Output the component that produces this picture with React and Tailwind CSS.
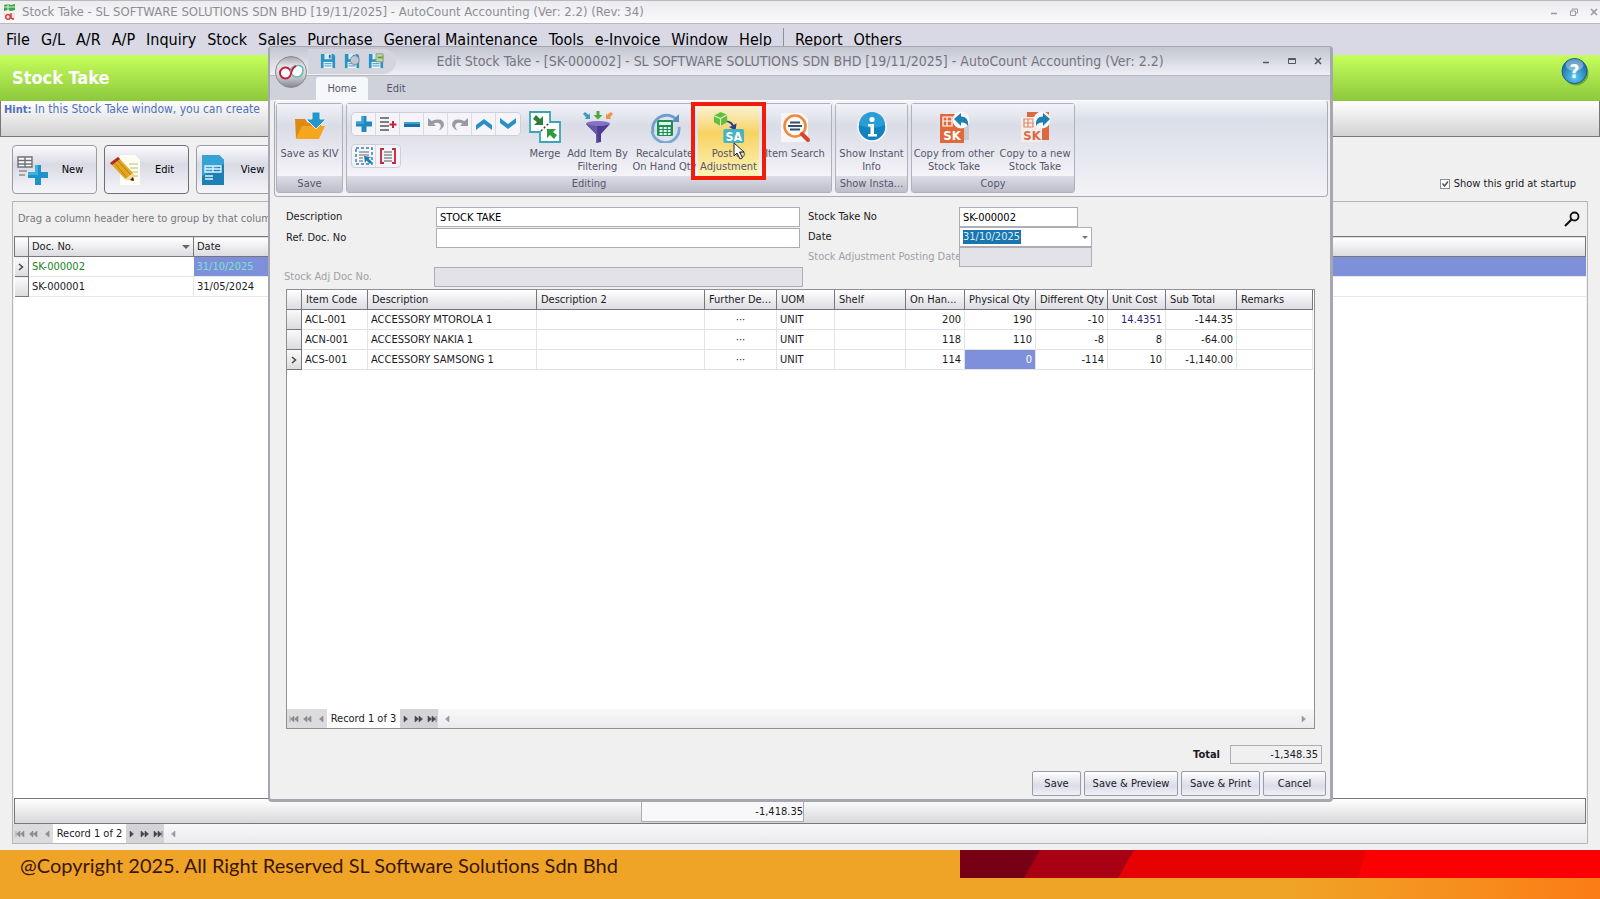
import { useState } from "react";

const MENUS = [
  "File",
  "G/L",
  "A/R",
  "A/P",
  "Inquiry",
  "Stock",
  "Sales",
  "Purchase",
  "General Maintenance",
  "Tools",
  "e-Invoice",
  "Window",
  "Help",
];

const COLUMNS = [
  { label: "Item Code", width: "w-[66px]" },
  { label: "Description", width: "w-[169px]" },
  { label: "Description 2", width: "w-[168px]" },
  { label: "Further De...", width: "w-[72px]" },
  { label: "UOM", width: "w-[58px]" },
  { label: "Shelf", width: "w-[71px]" },
  { label: "On Han...", width: "w-[59px]" },
  { label: "Physical Qty", width: "w-[71px]" },
  { label: "Different Qty", width: "w-[72px]" },
  { label: "Unit Cost", width: "w-[58px]" },
  { label: "Sub Total", width: "w-[71px]" },
  { label: "Remarks", width: "w-auto" },
];

const ITEMS = [
  { code: "ACL-001", name: "ACCESSORY MTOROLA 1", onHand: "200", physical: "190", diff: "-10", cost: "14.4351", total: "-144.35" },
  { code: "ACN-001", name: "ACCESSORY NAKIA 1", onHand: "118", physical: "110", diff: "-8", cost: "8", total: "-64.00" },
  { code: "ACS-001", name: "ACCESSORY SAMSONG 1", onHand: "114", physical: "0", diff: "-114", cost: "10", total: "-1,140.00" },
];

/* ---------- icons ---------- */

const AppIcon = () => (
  <svg viewBox="0 0 16 18" className="h-[18px] w-4 shrink-0">
    <path d="M2 2l4-1 3 1 4-1v6l-4 1-3-1-4 1z" fill="#3da744" />
    <path d="M2 4h11M6 1v7" stroke="#d6f2d6" strokeWidth="1" />
    <path d="M2 10h11v6H2z" fill="#f3dede" />
    <circle cx="6" cy="14" r="2.3" fill="none" stroke="#c33" strokeWidth="1.3" />
    <path d="M9 10v5q1 1 3 1" fill="none" stroke="#c33" strokeWidth="1.3" />
  </svg>
);

const Plus = ({ className }) => (
  <svg viewBox="0 0 16 16" className={className}>
    <path d="M5.500 0h5v5.500H16v5h-5.500V16h-5v-5.500H0v-5h5.500z" fill="#2187be" />
    <path d="M5.500 0h2.500v8H0V5.500h5.500z" fill="#3ba4d6" />
  </svg>
);

const NewIcon = () => (
  <svg viewBox="0 0 32 32" className="size-8">
    <path d="M1 3h14v10H1zM1 6.500h14M1 10h14M8 3v10" fill="#fff" stroke="#6d7076" strokeWidth="1.400" />
    <path d="M2 17h8M2 21h6" stroke="#8b8d92" strokeWidth="1.500" />
    <path d="M18 11h6v7h7v6h-7v7h-6v-7h-7v-6h7z" fill="#1f93c9" />
    <path d="M18 11h3v10H11v-3h7z" fill="#3fb1dd" />
  </svg>
);

const EditIcon = () => (
  <svg viewBox="0 0 32 32" className="size-8">
    <path d="M11 1h15l5 5v25H11z" fill="#fdfdf6" />
    <path d="M20 10h9M21 14h8M22 18h7M24 22h5" stroke="#b9c05a" strokeWidth="1" />
    <path d="M1 9l8-6 15 16 1 8-9-2z" fill="#e3a822" />
    <path d="M4 7l14 17M7 5l15 16" stroke="#b97c12" strokeWidth="1" />
    <path d="M1 9l8-6 2 2-8 6z" fill="#b1272b" />
    <path d="M16 25l8-6 1 8z" fill="#f2d9a2" />
    <path d="M21 26l3-3 1 4z" fill="#222" />
  </svg>
);

const ViewIcon = () => (
  <svg viewBox="0 0 24 32" className="h-8 w-6">
    <path d="M1 1h17l5 5v25H1z" fill="#1c7fb6" />
    <path d="M1 1h17l5 5v4L1 22z" fill="#35a3d3" />
    <path d="M4 12h16v6H4zM4 15h16M12 12v6M4 22h8M4 25h8" fill="none" stroke="#e3f4fb" strokeWidth="1.300" />
  </svg>
);

const HelpIcon = () => (
  <svg viewBox="0 0 28 30" className="h-[30px] w-7">
    <defs>
      <radialGradient id="help" cx="50%" cy="75%" r="70%">
        <stop offset="0" stopColor="#5ecbf5" />
        <stop offset="1" stopColor="#14639f" />
      </radialGradient>
    </defs>
    <circle cx="15" cy="16" r="12.500" fill="#3c6b21" opacity=".5" />
    <circle cx="13.500" cy="14" r="12.500" fill="url(#help)" stroke="#1c5d8e" />
    <ellipse cx="13.500" cy="8" rx="9" ry="6" fill="#fff" opacity=".35" />
    <text x="13.500" y="21" textAnchor="middle" fontSize="19" fontWeight="700" fill="#fff">
      ?
    </text>
  </svg>
);

const SearchIcon = () => (
  <svg viewBox="0 0 16 16" className="size-4" fill="none" stroke="#111">
    <circle cx="10.500" cy="5.500" r="4" strokeWidth="1.800" />
    <path d="M7.500 8.500L1 15" strokeWidth="2.200" />
  </svg>
);

const Orb = () => (
  <svg viewBox="0 0 34 34" className="size-[34px]">
    <defs>
      <linearGradient id="orb" x1="0" y1="0" x2="0" y2="1">
        <stop offset="0" stopColor="#a3a3ab" />
        <stop offset=".3" stopColor="#e2e2e7" />
        <stop offset=".6" stopColor="#d5d5da" />
        <stop offset="1" stopColor="#85858f" />
      </linearGradient>
    </defs>
    <circle cx="17" cy="17" r="15.500" fill="url(#orb)" stroke="#8a8a93" />
    <circle cx="11.500" cy="18" r="5.500" fill="#fff" stroke="#c11a3b" strokeWidth="2" />
    <path d="M17 19a6 6 0 0 1 4-8q7-2 8 3 0 8-6 8-4 0-5-3" fill="#fff" stroke="#69b9b4" strokeWidth="1.600" />
    <path d="M17 19q1-6 5-8" fill="none" stroke="#c11a3b" strokeWidth="1.800" />
  </svg>
);

const Disk = ({ className, children }) => (
  <svg viewBox="0 0 18 18" className={className}>
    <path d="M1 1h14l2 2v14H1z" fill="#2b93c4" />
    <path d="M5 1h8v6H5z" fill="#d8eef8" />
    <path d="M10 2h2v4h-2z" fill="#2b6f94" />
    <path d="M4 10h10v7H4z" fill="#e9f5fa" />
    <path d="M5 12h8M5 14.500h8" stroke="#2b93c4" />
    {children}
  </svg>
);

const SaveKivIcon = () => (
  <svg viewBox="0 0 32 32" className="size-8">
    <path d="M1 8h10l3 4h13v4H8L2 28z" fill="#dc8a16" />
    <path d="M2 28l6-13h23l-6 13z" fill="#f6a61c" />
    <path d="M18 1h8v7h6L22 18 12 8h6z" fill="#2397cd" stroke="#e9eef6" />
  </svg>
);

const AddLineIcon = () => (
  <svg viewBox="0 0 18 16" className="h-4 w-[18px]">
    <path d="M1 2h9M1 6h9M1 10h9M1 14h9" stroke="#55585c" strokeWidth="1.400" />
    <path d="M14 5v7M10.500 8.500h7" stroke="#c8213c" strokeWidth="2" />
  </svg>
);

const MinusIcon = () => (
  <svg viewBox="0 0 16 16" className="size-4">
    <path d="M0 6h16v5H0z" fill="#1d6fa3" />
    <path d="M0 6h16v2H0z" fill="#3ba4d6" />
  </svg>
);

const UndoIcon = ({ className = "" }) => (
  <svg viewBox="0 0 18 16" className={`h-4 w-[18px] ${className}`}>
    <path d="M1 2v8h8L6.500 7.500q5-2 7 1 1 3-2 6 5-2 5.500-6Q16 1 4.500 5z" fill="#9a9ba1" />
  </svg>
);

const ChevronIcon = ({ className = "" }) => (
  <svg viewBox="0 0 16 16" className={`size-4 ${className}`}>
    <path d="M0 9l8-6 8 6v5L8 8l-8 6z" fill="#2b8fc4" />
  </svg>
);

const SelectIcon = () => (
  <svg viewBox="0 0 18 18" className="size-[18px]">
    <path d="M1 1h16v16H1z" fill="none" stroke="#2f83ac" strokeWidth="1.500" strokeDasharray="3 2" />
    <path d="M4 5h10M4 8h10M4 11h4M4 14h4" stroke="#62666a" strokeWidth="1.200" />
    <path d="M9 9l7 1-2.500 1.500L17 15l-2 2-3.500-3.500L10 16z" fill="#1d7bb0" />
  </svg>
);

const BracketIcon = () => (
  <svg viewBox="0 0 18 18" className="size-[18px]" fill="none">
    <path d="M5 2H2v14h3M13 2h3v14h-3" stroke="#c8213c" strokeWidth="1.800" />
    <path d="M5 5h8M5 8h8M5 11h8M5 14h8" stroke="#55585c" strokeWidth="1.200" />
  </svg>
);

const MergeIcon = () => (
  <svg viewBox="0 0 32 32" className="size-8">
    <path d="M1 1h20v10h10v20H11V21H1z" fill="#fff" stroke="#3aa5b4" strokeWidth="1.800" />
    <path d="M12 20l8-8" stroke="#333" strokeDasharray="2 2" strokeWidth="1.400" />
    <path d="M4 8l3-4 4 4 3-3v9H5l3-3z" fill="#2f7d3d" />
    <path d="M28 24l-3 4-4-4-3 3v-9h9l-3 3z" fill="#2f9a3d" />
  </svg>
);

const FilterIcon = () => (
  <svg viewBox="0 0 32 32" className="size-8">
    <path d="M1 3l2-2 4 3 1-2v6H3l1-2z" fill="#3a9cc4" />
    <path d="M31 3l-2-2-4 3-1-2v6h5l-1-2z" fill="#ec9440" />
    <path d="M14.500 0h3v4h3L16 8.500 11.500 4h3z" fill="#45ad3e" />
    <ellipse cx="16" cy="12.500" rx="12" ry="2.500" fill="#8672c4" />
    <path d="M4 13q12 4 24 0l-9 10v8l-5 1v-9z" fill="#4f3c92" />
    <path d="M4 13q6 2 11 2l1 17h-2v-9z" fill="#6a56ab" />
  </svg>
);

const CalcIcon = () => (
  <svg viewBox="0 0 32 32" className="size-8" fill="none">
    <path d="M28 9A14 14 0 0 0 4 22" stroke="#6b9fd0" strokeWidth="2.800" />
    <path d="M30 3v8h-8z" fill="#5a8cc4" />
    <path d="M3 20a13.500 13.500 0 0 0 27-4" stroke="#79a8d2" strokeWidth="2.800" />
    <rect x="8" y="9" width="16" height="16" rx="1.500" fill="#1c8f57" />
    <path d="M10 11h12v3H10z" fill="#e3f5ea" />
    <path d="M10.500 17h11M10.500 20h11M10.500 23h11" stroke="#e3f5ea" strokeWidth="1.800" strokeDasharray="3 1.200" />
  </svg>
);

const PostIcon = () => (
  <svg viewBox="0 0 34 34" className="size-8">
    <path d="M1 5l7-4 7 3v8l-7 4-7-4z" fill="#63bd3c" />
    <path d="M1 5l7 3 7-4M8 8v8" stroke="#d9f5c4" strokeWidth="1.200" fill="none" />
    <path d="M15 10q6 1 7 5l3-2-1 8-7-4 3-1q-1-3-5-4z" fill="#2c3f8d" />
    <rect x="11" y="19" width="22" height="15" rx="2" fill="#45b3c2" />
    <text x="22" y="32" textAnchor="middle" fontSize="13" fontWeight="700" fill="#fff">
      SA
    </text>
  </svg>
);

const ItemSearchIcon = () => (
  <svg viewBox="0 0 32 32" className="size-8" fill="none">
    <path d="M2 2h21l6 6v23H2z" fill="#f6f6fa" />
    <circle cx="16" cy="15" r="10.500" stroke="#ec8a3f" strokeWidth="2.600" fill="#fdfaf6" />
    <path d="M11 11.500h10M9 15h14M11 18.500h10" stroke="#33506e" strokeWidth="1.800" />
    <path d="M23 23l6 6" stroke="#d9432d" strokeWidth="4" strokeLinecap="round" />
  </svg>
);

const InfoIcon = () => (
  <svg viewBox="0 0 32 32" className="size-8">
    <circle cx="16" cy="16" r="14" fill="#1182bd" stroke="#f6f8fb" strokeWidth="1.500" />
    <path d="M3 14a13 13 0 0 1 26 0q-13 6-26 0" fill="#2a9dd2" />
    <circle cx="16" cy="8.500" r="2.600" fill="#fff" />
    <path d="M12 13h6v10h3v2.500h-9V23h2.500v-7.500H12z" fill="#fff" />
  </svg>
);

const CopyFromIcon = () => (
  <svg viewBox="0 0 32 32" className="size-8">
    <path d="M22 14h9v15h-9z" fill="#c9c9d2" />
    <path d="M2 3h24v29H2z" fill="#e0683a" />
    <path d="M5 6h9v9H5zM5 10h9M9 6v9" fill="none" stroke="#fff" strokeWidth="1.200" />
    <circle cx="23" cy="9" r="8.500" fill="#f6f8fb" />
    <path d="M16 8l7-6v3.500q8 0 7 9.500-2-4-7-3.500V15z" fill="#1f7fae" />
    <text x="14" y="29" textAnchor="middle" fontSize="13" fontWeight="700" fill="#fff">
      SK
    </text>
  </svg>
);

const CopyToIcon = () => (
  <svg viewBox="0 0 32 32" className="size-8">
    <path d="M8 1h22v28H8z" fill="#dd6a3e" />
    <path d="M2 6h21v25H2z" fill="#f0eeee" />
    <path d="M5 8h9v8H5zM5 12h9M9 8v8" fill="none" stroke="#e08a66" strokeWidth="1.200" />
    <circle cx="23" cy="9" r="8.500" fill="#f6f8fb" />
    <path d="M31 8l-7-6v3.500q-8 0-7 9.500 2-4 7-3.500V15z" fill="#1f7fae" />
    <text x="13" y="29" textAnchor="middle" fontSize="13" fontWeight="700" fill="#dd6a3e">
      SK
    </text>
  </svg>
);

const Cursor = () => (
  <svg viewBox="0 0 12 18" className="absolute top-[38px] left-[35px] h-[18px] w-3">
    <path d="M1 1v13l3-3 3 6 2.500-1.200-3-5.800H11z" fill="#fff" stroke="#222" />
  </svg>
);

/* ---------- shared parts ---------- */

const WindowButtons = ({ className, maximised }) => (
  <div className={`flex items-center ${className}`}>
    <button aria-label="Minimise">
      <svg viewBox="0 0 8 8" className="size-2">
        <path d="M1 5.500h6" stroke="currentColor" strokeWidth="1.500" />
      </svg>
    </button>
    <button aria-label="Maximise">
      <svg viewBox="0 0 8 8" className="size-2" fill="none" stroke="currentColor">
        {maximised ? <path d="M.5 3h5v4.500h-5zM2 2.500V1h5.500v4H6" /> : <path d="M.5 1.500h7v5h-7zM.5 2.500h7" />}
      </svg>
    </button>
    <button aria-label="Close">
      <svg viewBox="0 0 8 8" className="size-2">
        <path d="M1 1l6 6M7 1L1 7" stroke="currentColor" strokeWidth="1.600" />
      </svg>
    </button>
  </div>
);

const NAV_PATHS = {
  First: "M1 1v6M5 1v6L1.500 4zM9 1v6L5.500 4z",
  "Previous page": "M5 1v6L1.500 4zM9 1v6L5.500 4z",
  Previous: "M7 1v6L3.500 4z",
  Next: "M3 1v6l3.500-3z",
  "Next page": "M1 1v6l3.500-3zM5 1v6l3.500-3z",
  Last: "M1 1v6l3.500-3zM5 1v6l3.500-3zM9 1v6",
};

const NavButton = ({ name }) => (
  <button aria-label={name} className="flex h-full w-[13px] items-center justify-center">
    <svg viewBox="0 0 10 8" className="h-2 w-2.5">
      <path d={NAV_PATHS[name]} fill="currentColor" stroke="currentColor" strokeWidth=".6" />
    </svg>
  </button>
);

const Navigator = ({ text, end }) => (
  <div className="flex h-[19px] items-center bg-gradient-to-b from-[#f8f8fa] to-[#ebebee] pr-1">
    <div className="flex h-full w-10 justify-between bg-[#dcdcdf] text-[#8c8c90]">
      <NavButton name="First" />
      <NavButton name="Previous page" />
      <NavButton name="Previous" />
    </div>
    <span className="h-full w-[73px] bg-white text-center leading-5 whitespace-nowrap">{text}</span>
    <div className="flex h-full w-[38px] bg-[#d4d4d8] text-[#47474b]">
      <NavButton name="Next" />
      <NavButton name="Next page" />
      <NavButton name="Last" />
    </div>
    <div className="flex flex-1 justify-between pl-0.5 text-[#9a9a9f]">
      <NavButton name="Previous" />
      {end && <NavButton name="Next" />}
    </div>
  </div>
);

const Indicator = ({ active }) => (
  <td className="border-r border-b border-[#77777c] bg-gradient-to-b from-[#fafafa] to-[#dcdce0] text-center">
    {active && (
      <svg viewBox="0 0 6 8" className="mx-auto h-2 w-1.5">
        <path d="M1 1l3.500 3L1 7" fill="none" stroke="#444" strokeWidth="1.500" />
      </svg>
    )}
  </td>
);

/* ---------- main window ---------- */

const BigButton = ({ icon, label, current }) => (
  <button
    className={`flex h-[49px] w-[85px] items-center rounded-sm border bg-gradient-to-b from-[#fbfbfd] via-[#d9dae4] via-40% to-[#f6f6f9] pl-1 text-black ${
      current ? "border-[#6f6f7c]" : "border-[#9c9ca6]"
    }`}
  >
    {icon}
    <span className="flex-1 text-center">{label}</span>
  </button>
);

const StockTakeList = () => {
  const [showGrid, setShowGrid] = useState(true);

  return (
    <main className="flex min-h-0 flex-1 flex-col bg-[#f0f0f0]">
      <header className="flex h-[46px] items-center justify-between bg-gradient-to-b from-[#c6ff5c] to-[#8cc83c] pr-[11px] pl-3">
        <h1 className="text-[18px] font-bold text-white">Stock Take</h1>
        <button aria-label="Help" className="-mt-3">
          <HelpIcon />
        </button>
      </header>
      <p className="h-9 border border-t-0 border-[#77777b] bg-gradient-to-b from-white to-[#d2d2d2] pl-[3px] text-[12px] leading-4 text-[#4f6fc0]">
        <b className="text-[11px]">Hint:</b> In this Stock Take window, you can create
      </p>

      <div className="flex items-center gap-[7px] pt-2 pr-6 pb-[7px] pl-3">
        <BigButton icon={<NewIcon />} label="New" />
        <BigButton icon={<EditIcon />} label="Edit" current />
        <BigButton icon={<ViewIcon />} label="View" />
        <label className="mt-7 ml-auto flex items-center gap-1">
          <span className="relative flex">
            <input
              type="checkbox"
              checked={showGrid}
              onChange={() => setShowGrid(!showGrid)}
              className="size-2.5 appearance-none border border-[#8d8d95] bg-white"
            />
            {showGrid && (
              <svg viewBox="0 0 10 10" className="pointer-events-none absolute inset-0 size-2.5">
                <path d="M2.500 4.500l2 2.500L8 2.500" fill="none" stroke="#55555b" strokeWidth="1.500" />
              </svg>
            )}
          </span>
          Show this grid at startup
        </label>
      </div>

      <section className="mr-3 mb-[6px] ml-3 flex min-h-0 flex-1 flex-col border border-[#b5b5ba]">
        <div className="flex h-[34px] items-center justify-between pr-[7px] pl-[5px] text-[#77777c]">
          Drag a column header here to group by that column
          <button aria-label="Search">
            <SearchIcon />
          </button>
        </div>
        <div className="mx-px flex-1 bg-white">
          <table className="w-full table-fixed border-collapse">
            <thead>
              <tr className="h-5 border border-[#77777c] bg-gradient-to-b from-white to-[#dcdce0] text-left">
                <th className="w-3.5 border-r border-[#77777c]" />
                <th className="w-[165px] border-r border-[#77777c] px-[3px] font-normal">
                  <div className="flex items-center justify-between">
                    Doc. No.
                    <svg viewBox="0 0 8 4" className="h-1 w-2">
                      <path d="M0 0h8L4 4z" fill="#66666b" />
                    </svg>
                  </div>
                </th>
                <th className="px-[3px] font-normal">Date</th>
              </tr>
            </thead>
            <tbody>
              <tr className="h-5 border-b border-[#e6e6ea]">
                <Indicator active />
                <td className="px-[3px] text-[#17861c]">SK-000002</td>
                <td className="bg-[#7d90d9] px-[3px] text-[#7de0cf]">31/10/2025</td>
              </tr>
              <tr className="h-5 border-b border-[#e6e6ea]">
                <Indicator />
                <td className="border-r border-[#e6e6ea] px-[3px]">SK-000001</td>
                <td className="px-[3px]">31/05/2024</td>
              </tr>
            </tbody>
          </table>
        </div>
        <div className="mx-px flex h-[26px] border border-[#77777c] bg-gradient-to-b from-white to-[#d8d8dc] pl-[626px]">
          <output className="mb-px w-[163px] border border-t-0 border-[#aaaab0] bg-[#f8f8fa] pt-1.5 text-right">-1,418.35</output>
        </div>
        <Navigator text="Record 1 of 2" />
      </section>
    </main>
  );
};

/* ---------- ribbon ---------- */

const RibbonGroup = ({ title, className = "", children }) => (
  <div className={`flex h-[90px] shrink-0 flex-col rounded-[3px] border border-[#b0b1bd] ${className}`}>
    <div className="flex flex-1 bg-gradient-to-b from-[#f2f3f8] via-[#dadce6] via-30% to-[#f3f3f8]">{children}</div>
    <div className="h-4 bg-gradient-to-b from-[#dcdce6] to-[#bebecb] text-center leading-4 whitespace-nowrap">{title}</div>
  </div>
);

const RibbonButton = ({ icon, label, className = "", children }) => (
  <button className={`relative flex shrink-0 flex-col items-center pt-[7px] leading-[13px] whitespace-pre ${className}`}>
    {icon}
    <span className="mt-1">{label}</span>
    {children}
  </button>
);

const ToolStrip = ({ items }) => (
  <div className="flex h-6 w-fit divide-x divide-[#dcdce4] rounded-sm border border-[#cfcfd9] bg-[#f5f5f9]">
    {items.map(([name, icon]) => (
      <button key={name} aria-label={name} className="flex w-6 items-center justify-center">
        {icon}
      </button>
    ))}
  </div>
);

const Ribbon = () => (
  <div className="mr-0.5 ml-1 flex h-[97px] gap-[3px] rounded-[4px] border border-[#a9aab5] border-t-white bg-gradient-to-b from-[#f4f5fa] via-[#dadee8] via-20% to-[#f3f3f6] px-px py-0.5 text-[#55566a]">
    <RibbonGroup title="Save" className="w-[67px]">
      <RibbonButton icon={<SaveKivIcon />} label="Save as KIV" className="w-full" />
    </RibbonGroup>
    <RibbonGroup title="Editing" className="w-[486px]">
      <div className="flex w-[179px] shrink-0 flex-col gap-2 pt-2 pl-1">
        <ToolStrip
          items={[
            ["Add", <Plus className="size-4" />],
            ["Insert", <AddLineIcon />],
            ["Remove", <MinusIcon />],
            ["Undo", <UndoIcon />],
            ["Redo", <UndoIcon className="-scale-x-100" />],
            ["Move up", <ChevronIcon />],
            ["Move down", <ChevronIcon className="rotate-180" />],
          ]}
        />
        <ToolStrip
          items={[
            ["Select all", <SelectIcon />],
            ["Range set", <BracketIcon />],
          ]}
        />
      </div>
      <RibbonButton icon={<MergeIcon />} label="Merge" className="w-[38px]" />
      <RibbonButton icon={<FilterIcon />} label={"Add Item By\nFiltering"} className="w-[67px]" />
      <RibbonButton icon={<CalcIcon />} label={"Recalculate\nOn Hand Qty"} className="w-[67px]" />
      <RibbonButton
        icon={<PostIcon />}
        label={"Post to\nAdjustment"}
        className="z-10 w-[61px] bg-gradient-to-b from-[#fbf3d8] via-[#f7d35e] via-40% to-[#fcf2b4]"
      >
        <span className="absolute -inset-x-[7px] -top-0.5 -bottom-1 border-4 border-[#f01c0c]" />
        <Cursor />
      </RibbonButton>
      <RibbonButton icon={<ItemSearchIcon />} label="Item Search" className="w-[72px]" />
    </RibbonGroup>
    <RibbonGroup title="Show Insta..." className="w-[73px]">
      <RibbonButton icon={<InfoIcon />} label={"Show Instant\nInfo"} className="w-full" />
    </RibbonGroup>
    <RibbonGroup title="Copy" className="w-[164px]">
      <RibbonButton icon={<CopyFromIcon />} label={"Copy from other\nStock Take"} className="w-[84px]" />
      <RibbonButton icon={<CopyToIcon />} label={"Copy to a new\nStock Take"} className="w-[78px]" />
    </RibbonGroup>
  </div>
);

/* ---------- edit window ---------- */

const inputClass = "h-5 border border-[#acadb5] bg-white px-[3px] text-black disabled:bg-[#e2e2e8]";

const DocumentForm = () => (
  <form className="flex px-3.5 pt-2.5">
    <div className="w-[524px]">
      <div className="flex items-center">
        <label htmlFor="description" className="w-[152px] pl-0.5">Description</label>
        <input id="description" defaultValue="STOCK TAKE" className={`${inputClass} w-[364px]`} />
      </div>
      <div className="mt-px flex items-center">
        <label htmlFor="ref" className="w-[152px] pl-0.5">Ref. Doc. No</label>
        <input id="ref" className={`${inputClass} w-[364px]`} />
      </div>
      <div className="mt-[19px] flex items-center">
        <label htmlFor="adj" className="w-[150px] text-[#a0a0a6]">Stock Adj Doc No.</label>
        <input id="adj" disabled className={`${inputClass} w-[369px]`} />
      </div>
    </div>
    <div>
      <div className="flex items-center">
        <label htmlFor="docno" className="w-[151px]">Stock Take No</label>
        <input id="docno" defaultValue="SK-000002" className={`${inputClass} w-[119px]`} />
      </div>
      <div className="flex items-center">
        <label htmlFor="date" className="w-[151px]">Date</label>
        <div className={`${inputClass} flex w-[133px] items-center justify-between`}>
          <input id="date" defaultValue="31/10/2025" className="h-3.5 w-[58px] bg-[#1b74ae] text-[#d8f0ff]" />
          <button type="button" aria-label="Open calendar">
            <svg viewBox="0 0 6 3" className="h-[3px] w-1.5">
              <path d="M0 0h6L3 3z" fill="#77777c" />
            </svg>
          </button>
        </div>
      </div>
      <div className="flex items-center">
        <label htmlFor="posting" className="w-[151px] whitespace-nowrap text-[#a0a0a6]">Stock Adjustment Posting Date</label>
        <input id="posting" disabled className={`${inputClass} w-[133px]`} />
      </div>
    </div>
  </form>
);

const ItemGrid = () => {
  const cell = "border-r border-b border-[#e2e2e8] px-[3px]";

  return (
    <section className="mr-[15px] ml-4 mt-0.5 flex min-h-0 flex-1 flex-col border border-[#8f8f95] bg-white">
      <div className="flex-1 pr-px">
        <table className="w-full table-fixed border-separate border-spacing-0">
          <thead>
            <tr className="h-5 text-left">
              <th className="w-[15px] border-r border-b border-[#77777c] bg-gradient-to-b from-white to-[#dcdce2]" />
              {COLUMNS.map((col) => (
                <th
                  key={col.label}
                  className={`border-r border-b border-[#77777c] bg-gradient-to-b from-white to-[#dcdce2] pl-1 font-normal whitespace-nowrap ${col.width}`}
                >
                  {col.label}
                </th>
              ))}
            </tr>
          </thead>
          <tbody>
            {ITEMS.map((item, index) => {
              const active = index === ITEMS.length - 1;
              return (
                <tr key={item.code} className="h-5">
                  <Indicator active={active} />
                  <td className={cell}>{item.code}</td>
                  <td className={cell}>{item.name}</td>
                  <td className={cell} />
                  <td className={`${cell} text-center`}>
                    <button aria-label="Further description">···</button>
                  </td>
                  <td className={cell}>UNIT</td>
                  <td className={cell} />
                  <td className={`${cell} text-right`}>{item.onHand}</td>
                  <td className={`${cell} text-right ${active ? "bg-[#7d90d9] text-white" : ""}`}>{item.physical}</td>
                  <td className={`${cell} text-right`}>{item.diff}</td>
                  <td className={`${cell} text-right ${index === 0 ? "text-[#32207c]" : ""}`}>{item.cost}</td>
                  <td className={`${cell} text-right`}>{item.total}</td>
                  <td className={cell} />
                </tr>
              );
            })}
          </tbody>
        </table>
      </div>
      <Navigator text="Record 1 of 3" end />
    </section>
  );
};

const ActionButton = ({ label, className }) => (
  <button className={`h-[25px] rounded-[2px] border border-[#9a9ba8] bg-gradient-to-b from-white via-[#dadce8] via-60% to-[#f0f0f6] whitespace-nowrap ${className}`}>
    {label}
  </button>
);

const EditWindow = () => (
  <div
    role="dialog"
    aria-label="Edit Stock Take"
    className="absolute top-[46px] right-[267px] bottom-[97px] left-[268px] flex flex-col rounded-[4px] border border-r-[3px] border-b-[3px] border-l-2 border-[#a6a7b0] bg-[#f0f0f0]"
  >
    <div className="grid h-[29px] grid-cols-[1fr_auto_1fr] items-center border-b border-[#b8b9c2] bg-gradient-to-b from-[#c3c5d0] to-[#eff0f6]">
      <div className="ml-[38px] flex h-[25px] w-[88px] items-center gap-2 rounded-r-full bg-[#d3d4de] pl-3">
        <button aria-label="Save">
          <Disk className="size-4" />
        </button>
        <button aria-label="Save and preview">
          <Disk className="size-4">
            <circle cx="12" cy="8" r="5" fill="#bfc6d2" stroke="#77869a" />
          </Disk>
        </button>
        <button aria-label="Save and print">
          <Disk className="size-4">
            <path d="M9 1h8v9H9z" fill="#c6cfb2" stroke="#8a9b62" />
            <path d="M11 5h6" stroke="#54a336" strokeWidth="2" />
          </Disk>
        </button>
      </div>
      <h2 className="text-[14px] whitespace-nowrap text-[#74757e]">
        Edit Stock Take - [SK-000002] - SL SOFTWARE SOLUTIONS SDN BHD [19/11/2025] - AutoCount Accounting (Ver: 2.2)
      </h2>
      <WindowButtons className="mr-2 gap-[18px] justify-self-end text-[#55565e]" />
    </div>
    <button aria-label="Application menu" className="absolute top-2 left-1">
      <Orb />
    </button>
    <nav className="flex h-6 items-end bg-[#cfd2da] pl-[46px] text-[#55566a]">
      <button className="h-[23px] w-[52px] rounded-t-[3px] bg-[#f6f7fb]">Home</button>
      <button className="h-[23px] w-14">Edit</button>
    </nav>
    <Ribbon />
    <DocumentForm />
    <ItemGrid />
    <footer className="flex flex-col items-end gap-[7px] pt-4 pr-1 pb-[3px]">
      <div className="flex items-center gap-2.5 pr-1">
        <label htmlFor="total" className="font-bold">Total</label>
        <input id="total" readOnly value="-1,348.35" className="h-[19px] w-[92px] border border-[#acadb5] bg-[#f0f0f0] px-[3px] text-right" />
      </div>
      <div className="flex gap-[3px]">
        <ActionButton label="Save" className="w-[49px]" />
        <ActionButton label="Save & Preview" className="w-[94px]" />
        <ActionButton label="Save & Print" className="w-[79px]" />
        <ActionButton label="Cancel" className="w-[63px]" />
      </div>
    </footer>
  </div>
);

export default function App() {
  return (
    <div className="relative flex h-screen flex-col overflow-hidden font-['DejaVu_Sans_Condensed','DejaVu_Sans',sans-serif] text-[11px] leading-[14px] text-[#1a1a1e]">
      <div className="flex h-6 items-center gap-1 border-t border-b border-[#b9b9bd] bg-gradient-to-b from-[#ececf0] to-[#fafafc] px-0.5 text-[#8d8d92]">
        <AppIcon />
        <span className="text-[13px]">Stock Take - SL SOFTWARE SOLUTIONS SDN BHD [19/11/2025] - AutoCount Accounting (Ver: 2.2) (Rev: 34)</span>
        <WindowButtons maximised className="ml-auto gap-3 text-[#9a9aa0]" />
      </div>
      <nav className="flex h-[31px] items-center gap-[11px] bg-[#d9d9e6] pl-1.5 text-[16px] whitespace-nowrap text-black">
        {MENUS.map((menu) => (
          <button key={menu}>{menu}</button>
        ))}
        <span className="h-6 border-l border-[#8f8f98]" />
        <button>Report</button>
        <button>Others</button>
      </nav>
      <StockTakeList />
      <EditWindow />
      <footer className="flex h-[49px] items-start justify-between bg-gradient-to-r from-[#efa427] from-80% to-[#fb7c14]">
        <p className="pt-[3px] pl-5 font-['Lato',sans-serif] text-[20px] leading-6 text-[#3a1608]">
          @Copyright 2025. All Right Reserved SL Software Solutions Sdn Bhd
        </p>
        <svg viewBox="0 0 640 28" preserveAspectRatio="none" className="h-7 w-2/5">
          <path d="M0 0h640v28H0z" fill="#fb0000" />
          <path d="M0 0h406l-8 28H0z" fill="#e60202" />
          <path d="M0 0h174l-16 28H0z" fill="#a90014" />
          <path d="M0 0h80L64 28H0z" fill="#780014" />
        </svg>
      </footer>
    </div>
  );
}
